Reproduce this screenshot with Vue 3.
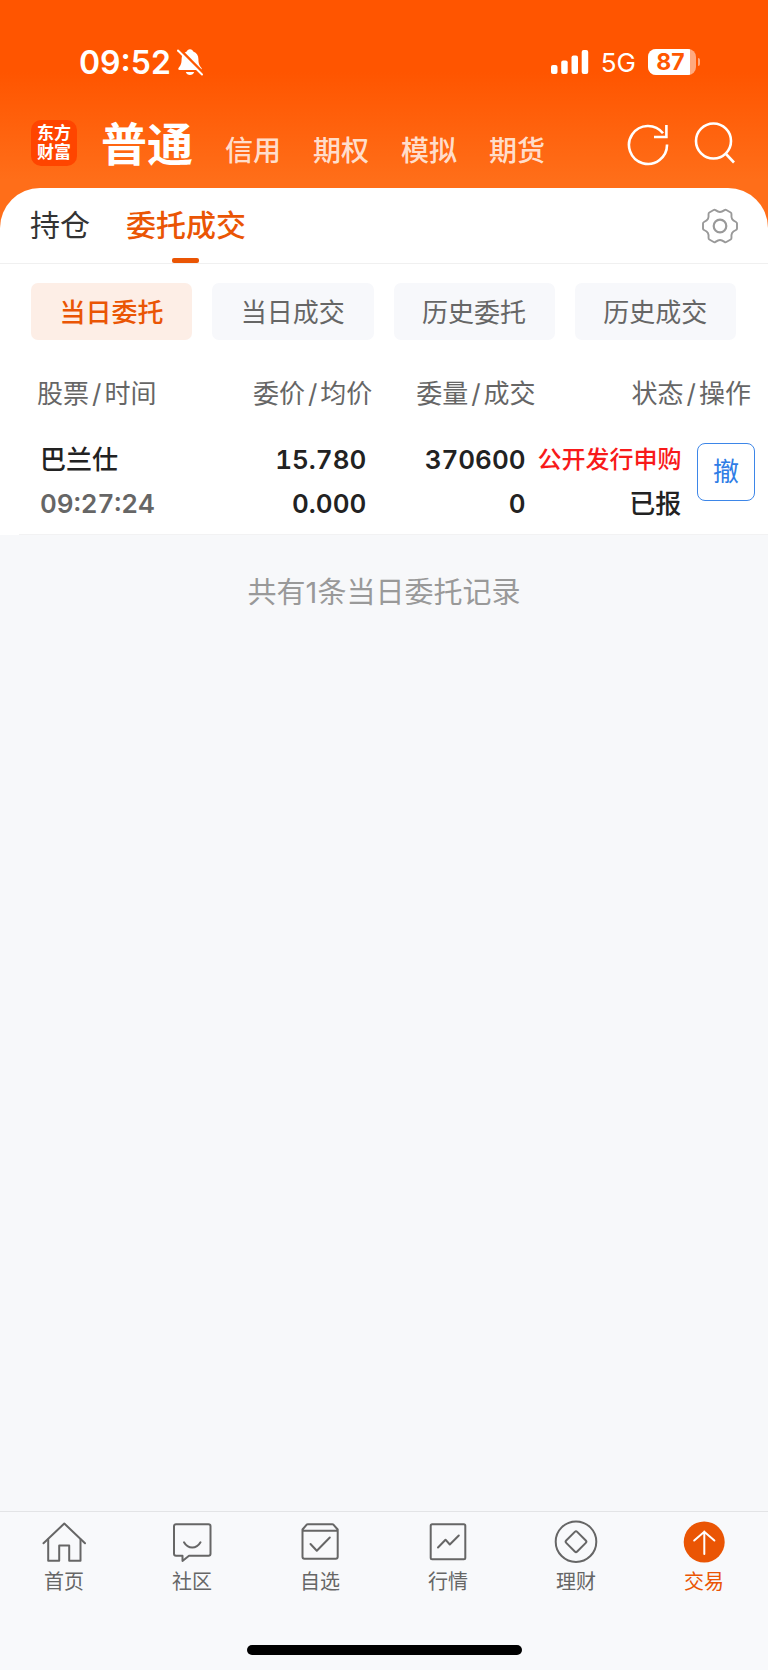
<script setup>
import { ref } from 'vue'

const markets = ['普通', '信用', '期权', '模拟', '期货']
const market = ref('普通')
const tabs = ['持仓', '委托成交']
const tab = ref('委托成交')
const filters = ['当日委托', '当日成交', '历史委托', '历史成交']
const filter = ref('当日委托')
const orders = [
  { name: '巴兰仕', time: '09:27:24', price: '15.780', average: '0.000', amount: '370600', filled: '0', kind: '公开发行申购', state: '已报' }
]
const navItems = [
  { id: 'home', label: '首页' },
  { id: 'social', label: '社区' },
  { id: 'watch', label: '自选' },
  { id: 'quotes', label: '行情' },
  { id: 'wealth', label: '理财' },
  { id: 'trade', label: '交易' }
]
const nav = ref('trade')

// Six-lobed cog outline, one lobe and one valley per 60 degrees
function cogPath(cx, cy) {
  const turn = (x, y, k) => {
    const a = (k * Math.PI) / 3
    return `${(cx + x * Math.cos(a) - y * Math.sin(a)).toFixed(2)} ${(cy + x * Math.sin(a) + y * Math.cos(a)).toFixed(2)}`
  }
  let d = `M${turn(16, -4, 0)}`
  for (let k = 0; k < 6; k++) {
    d += ` Q${turn(17, -3.5, k)} ${turn(17, -2.5, k)} L${turn(17, 2.5, k)} Q${turn(17, 3.5, k)} ${turn(16, 4, k)}`
    d += ` C${turn(12, 5.9, k)} ${turn(11.1, 7.4, k)} ${turn(16, -4, k + 1)}`
  }
  return d + 'Z'
}
const cog = cogPath(18, 18)
</script>

<template>
  <div class="page">
    <header class="top">
      <div class="status">
        <span class="clock">09:52</span>
        <svg class="bell" width="28" height="28" viewBox="0 0 28 28" aria-hidden="true">
          <path d="M14 1.2c-1.700 0-2.900 1-3.300 2.300C7.200 4.700 5.600 7.600 5.600 11c0 5-1.300 6.900-2.900 8.700-.9 1-.4 2.300.9 2.300h20.800c1.300 0 1.800-1.300.9-2.300-1.600-1.800-2.900-3.700-2.900-8.700 0-3.400-1.600-6.300-5.100-7.500C16.900 2.200 15.700 1.200 14 1.200Z" fill="#fff" />
          <path d="M9.800 24h8.400c-.6 1.900-2.200 3-4.200 3s-3.600-1.100-4.200-3Z" fill="#fff" />
          <path d="M3 .8 28 25.800" stroke="#ff5700" stroke-width="3" />
          <path d="M2 2.500 26 26.500" stroke="#fff" stroke-width="2" stroke-linecap="round" />
        </svg>
        <span class="spacer"></span>
        <svg class="signal" width="38" height="24" viewBox="0 0 38 24" aria-hidden="true" fill="#fff">
          <rect x="0" y="15" width="6.500" height="9" rx="2" />
          <rect x="10.200" y="10.500" width="6.500" height="13.500" rx="2" />
          <rect x="20.500" y="5.500" width="6.500" height="18.500" rx="2" />
          <rect x="30.700" y="0" width="6.500" height="24" rx="2" />
        </svg>
        <span class="network">5G</span>
        <span class="battery"><span class="level">87</span></span>
        <span class="nub"></span>
      </div>
      <div class="bar">
        <div class="logo">东方<br />财富</div>
        <nav class="markets">
          <button v-for="m in markets" :key="m" type="button" :class="{ on: m === market }" @click="market = m">{{ m }}</button>
        </nav>
        <span class="spacer"></span>
        <button type="button" class="icon" aria-label="刷新">
          <svg width="44" height="44" viewBox="0 0 44 44" fill="none" stroke="#fff" stroke-width="2.600">
            <path d="M41 22.500A19 19 0 1 1 37 11.300" />
            <path d="M40.400 3v12H28" />
          </svg>
        </button>
        <button type="button" class="icon" aria-label="搜索">
          <svg width="44" height="44" viewBox="0 0 44 44" fill="none" stroke="#fff" stroke-width="2.600">
            <circle cx="20.500" cy="19" r="17.500" />
            <path d="M32.500 31.500 41 40.500" />
          </svg>
        </button>
      </div>
    </header>

    <main class="sheet">
      <div class="tabs">
        <button v-for="t in tabs" :key="t" type="button" :class="{ on: t === tab }" @click="tab = t">{{ t }}</button>
        <span class="spacer"></span>
        <button type="button" class="icon" aria-label="设置">
          <svg width="36" height="36" viewBox="0 0 36 36" fill="none" stroke="#999">
            <path :d="cog" stroke-width="1.900" />
            <circle cx="18" cy="18" r="6.300" stroke-width="2.200" />
          </svg>
        </button>
      </div>

      <div class="filters">
        <button v-for="f in filters" :key="f" type="button" :class="{ on: f === filter }" @click="filter = f">{{ f }}</button>
      </div>

      <table>
        <colgroup>
          <col class="c-name" /><col class="c-price" /><col class="c-amount" /><col class="c-state" /><col class="c-action" />
        </colgroup>
        <thead>
          <tr>
            <th class="name">股票<i>/</i>时间</th>
            <th class="price">委价<i>/</i>均价</th>
            <th class="amount">委量<i>/</i>成交</th>
            <th class="state" colspan="2">状态<i>/</i>操作</th>
          </tr>
        </thead>
        <tbody>
          <tr v-for="o in orders" :key="o.time">
            <td class="name"><div>{{ o.name }}</div><div class="time">{{ o.time }}</div></td>
            <td class="price"><div>{{ o.price }}</div><div>{{ o.average }}</div></td>
            <td class="amount"><div>{{ o.amount }}</div><div>{{ o.filled }}</div></td>
            <td class="state"><div class="kind">{{ o.kind }}</div><div>{{ o.state }}</div></td>
            <td class="action"><button type="button">撤</button></td>
          </tr>
        </tbody>
      </table>
      <div class="rule"></div>
    </main>

    <p class="summary">共有1条当日委托记录</p>

    <footer>
      <nav class="dock">
        <button v-for="n in navItems" :key="n.id" type="button" :class="{ on: n.id === nav }" @click="nav = n.id">
          <svg width="44" height="44" viewBox="0 0 44 44" fill="none" stroke="currentColor" stroke-width="2" stroke-linejoin="round" stroke-linecap="round" aria-hidden="true">
            <template v-if="n.id === 'home'">
              <path d="M1.500 23.300 22.300 3.500 43 23.300" />
              <path d="M6.200 19.500v21.200h11V25.500h10v15.200h11.300V19.500" />
            </template>
            <template v-else-if="n.id === 'social'">
              <path d="M6 4.200h32.500a2 2 0 0 1 2 2v27.600a2 2 0 0 1-2 2H19l-6.500 5.200v-5.200H6a2 2 0 0 1-2-2V6.200a2 2 0 0 1 2-2Z" />
              <path d="M14 22.300c4 7 12.500 7 16.500 0" />
            </template>
            <template v-else-if="n.id === 'watch'">
              <path d="M4.500 10.700h35.200v26a2 2 0 0 1-2 2H6.500a2 2 0 0 1-2-2V9.500l4-4.700c.4-.4.800-.6 1.300-.6h24.500c.5 0 .9.200 1.300.6l4.100 4.700v1.200" />
              <path d="m12.500 24 6.300 6.700 13-13.200" />
            </template>
            <template v-else-if="n.id === 'quotes'">
              <rect x="4.700" y="4.200" width="34.600" height="35" rx="1.500" />
              <path d="m12 27.500 7.500-7.800 4.300 4.800 9-9" />
            </template>
            <template v-else-if="n.id === 'wealth'">
              <circle cx="22" cy="21.700" r="20.300" />
              <path d="m20.800 11.900-8.600 8.600a1.700 1.700 0 0 0 0 2.400l8.600 8.600a1.700 1.700 0 0 0 2.400 0l8.600-8.600a1.700 1.700 0 0 0 0-2.400l-8.600-8.600a1.700 1.700 0 0 0-2.400 0Z" />
            </template>
            <template v-else>
              <circle cx="22.200" cy="22" r="20.500" fill="currentColor" stroke="none" />
              <path d="M22.300 11.500V34M12.200 20.500l10.100-8.700 10.100 8.700" stroke="#fff" stroke-width="2" stroke-linejoin="miter" />
            </template>
          </svg>
          <span>{{ n.label }}</span>
        </button>
      </nav>
      <div class="indicator"></div>
    </footer>
  </div>
</template>

<style>
body {
  background: #f7f8fa;
}
</style>

<style scoped>
.page {
  display: flex;
  flex-direction: column;
  min-height: 100vh;
  font-family: Inter, "Noto Sans CJK SC", sans-serif;
  color: #222;
  background: #f7f8fa;
}
button {
  margin: 0;
  padding: 0;
  border: 0;
  background: none;
  font: inherit;
  color: inherit;
  white-space: nowrap;
}
svg {
  display: block;
  flex: none;
}
.spacer {
  flex: 1;
}
.top {
  height: 228px;
  margin-bottom: -40px;
  background: linear-gradient(#ff5500 0, #ff5500 72px, #ff6e19 180px);
  color: #fff;
}
.status {
  display: flex;
  align-items: center;
  height: 26px;
  padding: 49px 68px 0 79px;
}
.clock {
  padding-top: 2px;
  font-size: 32px;
  font-weight: 600;
  line-height: 32px;
}
.bell {
  margin-left: 5px;
}
.network {
  padding-top: 2px;
  margin: 0 12px 0 12px;
  font-size: 26px;
  font-weight: 400;
  line-height: 26px;
}
.battery {
  width: 48px;
  height: 26px;
  border-radius: 8px;
  overflow: hidden;
  background: rgba(255, 255, 255, 0.5);
}
.level {
  display: block;
  width: 87%;
  padding-left: 3px;
  box-sizing: border-box;
  background: #fff;
  color: #ff5700;
  font-size: 23px;
  font-weight: 700;
  line-height: 26px;
  text-align: center;
}
.nub {
  width: 2px;
  height: 8px;
  margin-left: 2px;
  border-radius: 0 4px 4px 0;
  background: rgba(255, 255, 255, 0.5);
}
.bar {
  display: flex;
  align-items: center;
  height: 64px;
  padding: 36px 31px 0 31px;
}
.logo {
  width: 46px;
  height: 46px;
  padding-top: 4px;
  box-sizing: border-box;
  border-radius: 10px;
  background: #ff4500;
  font-size: 17px;
  font-weight: 700;
  line-height: 19px;
  text-align: center;
}
.markets {
  display: flex;
  align-items: baseline;
  gap: 32px;
  padding-top: 8px;
  margin-left: 24px;
  font-size: 28px;
  font-weight: 500;
  line-height: 60px;
  color: rgba(255, 255, 255, 0.8);
}
.markets .on {
  font-size: 46px;
  font-weight: 700;
  color: #fff;
}
.bar .icon {
  padding-top: 2px;
}
.bar .icon + .icon {
  margin-left: 23px;
}
.sheet {
  background: #fff;
  border-radius: 40px 40px 0 0;
}
.tabs {
  display: flex;
  align-items: center;
  gap: 36px;
  height: 75px;
  padding: 0 30px;
  border-bottom: 1px solid #f0f0f0;
  font-size: 30px;
  line-height: 75px;
  color: #333;
}
.tabs .on {
  position: relative;
  font-weight: 500;
  color: #ea5504;
}
.tabs .on::after {
  content: "";
  position: absolute;
  left: 50%;
  bottom: 0;
  width: 27px;
  height: 5px;
  margin-left: -14px;
  border-radius: 2px;
  background: #ea5504;
}
.filters {
  display: grid;
  grid-template-columns: repeat(4, 1fr);
  gap: 20px;
  padding: 19px 32px 0 31px;
}
.filters button {
  height: 57px;
  padding-bottom: 2px;
  border-radius: 7px;
  background: #f7f8fb;
  font-size: 26px;
  color: #666;
}
.filters .on {
  background: #fdeee6;
  font-weight: 500;
  color: #ea5504;
}
table {
  width: 100%;
  margin-top: 24px;
  border-collapse: collapse;
  table-layout: fixed;
  font-size: 26px;
  font-variant-numeric: tabular-nums;
}
.c-name { width: 26%; }
.c-price { width: 23%; }
.c-amount { width: 21%; }
.c-state { width: 20%; }
.c-action { width: 10%; }
th,
td {
  padding: 0;
  text-align: right;
  white-space: nowrap;
}
th {
  font-weight: 400;
  line-height: 60px;
  color: #666;
}
th i {
  margin: 0 3px;
  font-style: normal;
}
th.name {
  padding-left: 37px;
  text-align: left;
}
th.price { padding-right: 4px; }
th.amount { padding-right: 2px; }
th.state { padding-right: 17px; }
td {
  padding-top: 14px;
  padding-bottom: 8px;
  font-weight: 500;
  line-height: 44px;
}
td.name {
  padding-left: 40px;
  text-align: left;
}
td.price,
td.amount {
  font-weight: 600;
}
td.price { padding-right: 10px; }
td.amount { padding-right: 12px; }
td.state { padding-right: 10px; }
.time {
  font-weight: 600;
  color: #666;
}
.kind {
  font-size: 24px;
  color: #f81a1a;
}
td.action {
  padding-top: 19px;
  padding-right: 13px;
  vertical-align: top;
}
.action button {
  display: block;
  width: 58px;
  height: 58px;
  margin-left: auto;
  border: 1px solid #3d86e8;
  border-radius: 8px;
  font-size: 26px;
  font-weight: 400;
  line-height: 56px;
  color: #2f7de6;
}
.rule {
  height: 1px;
  margin-left: 19px;
  background: #f2f2f3;
}
.summary {
  flex: 1;
  margin: 38px 0 0;
  font-size: 29px;
  line-height: 40px;
  text-align: center;
  color: #999;
}
footer {
  border-top: 1px solid #e3e4e6;
  background: #f8f9fb;
}
.dock {
  display: grid;
  grid-template-columns: repeat(6, 1fr);
  padding-top: 8px;
  color: #666;
}
.dock button {
  display: flex;
  flex-direction: column;
  align-items: center;
  gap: 4px;
  font-size: 20px;
  line-height: 28px;
}
.dock .on {
  color: #ea5504;
}
.indicator {
  width: 275px;
  height: 10px;
  margin: 49px auto 15px;
  border-radius: 5px;
  background: #000;
}
</style>
